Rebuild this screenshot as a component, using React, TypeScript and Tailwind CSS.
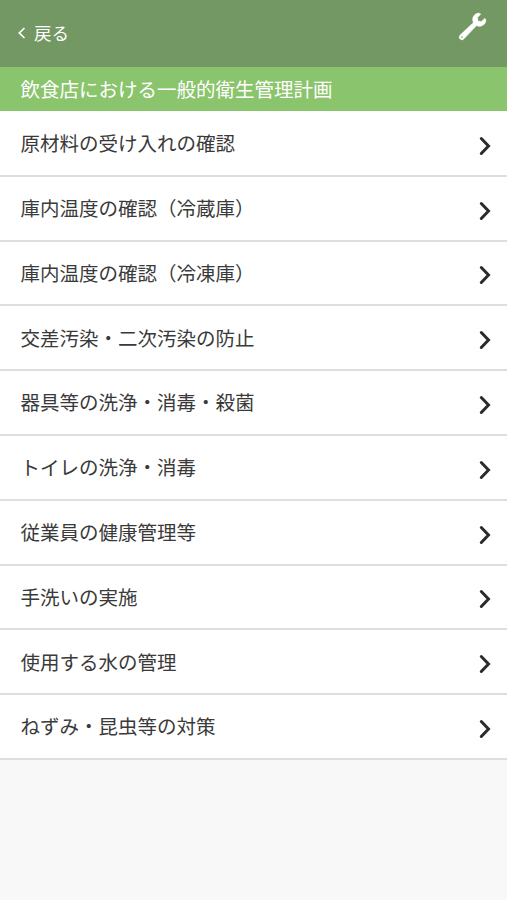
import { IoIosBuild } from "react-icons/io";

const items = [
  "原材料の受け入れの確認",
  "庫内温度の確認（冷蔵庫）",
  "庫内温度の確認（冷凍庫）",
  "交差汚染・二次汚染の防止",
  "器具等の洗浄・消毒・殺菌",
  "トイレの洗浄・消毒",
  "従業員の健康管理等",
  "手洗いの実施",
  "使用する水の管理",
  "ねずみ・昆虫等の対策",
];

export default function App() {
  return (
    <div className="min-h-screen overflow-hidden bg-[#f8f8f8] font-['Noto_Sans_CJK_JP',sans-serif]">
      <header className="flex h-[67px] justify-between bg-[#739863] pl-[17px] pr-[18px] text-white">
        <button className="flex h-[66px] items-center gap-[8px] text-[17.5px]">
          <svg width="9" height="12" viewBox="0 0 9 12" fill="none" stroke="currentColor" strokeWidth="1.7">
            <path d="M7.5 1 2.3 6 7.5 11" />
          </svg>
          <span>戻る</span>
        </button>
        <IoIosBuild className="mt-[10px] size-[33px] stroke-white stroke-[5px]" />
      </header>
      <h1 className="flex h-[44px] items-center bg-[#8ac46c] pl-[20.5px] text-[19.5px] leading-none text-white">
        飲食店における一般的衛生管理計画
      </h1>
      <ul className="bg-white pt-px">
        {items.map((t) => (
          <li key={t} className="flex h-[64.8px] items-center justify-between border-b-2 border-[#dedede] pl-[20.5px] pr-[16px] text-[19.5px] leading-none text-[#3a3a3a]">
            <span className="pb-px">{t}</span>
            <svg className="mt-[5px]" width="12" height="20" viewBox="0 0 12 20" fill="none" stroke="#2b2b2b" strokeWidth="3" strokeLinecap="round">
              <path d="M2.3 2.5 9.5 10 2.3 17.5" />
            </svg>
          </li>
        ))}
      </ul>
    </div>
  );
}
